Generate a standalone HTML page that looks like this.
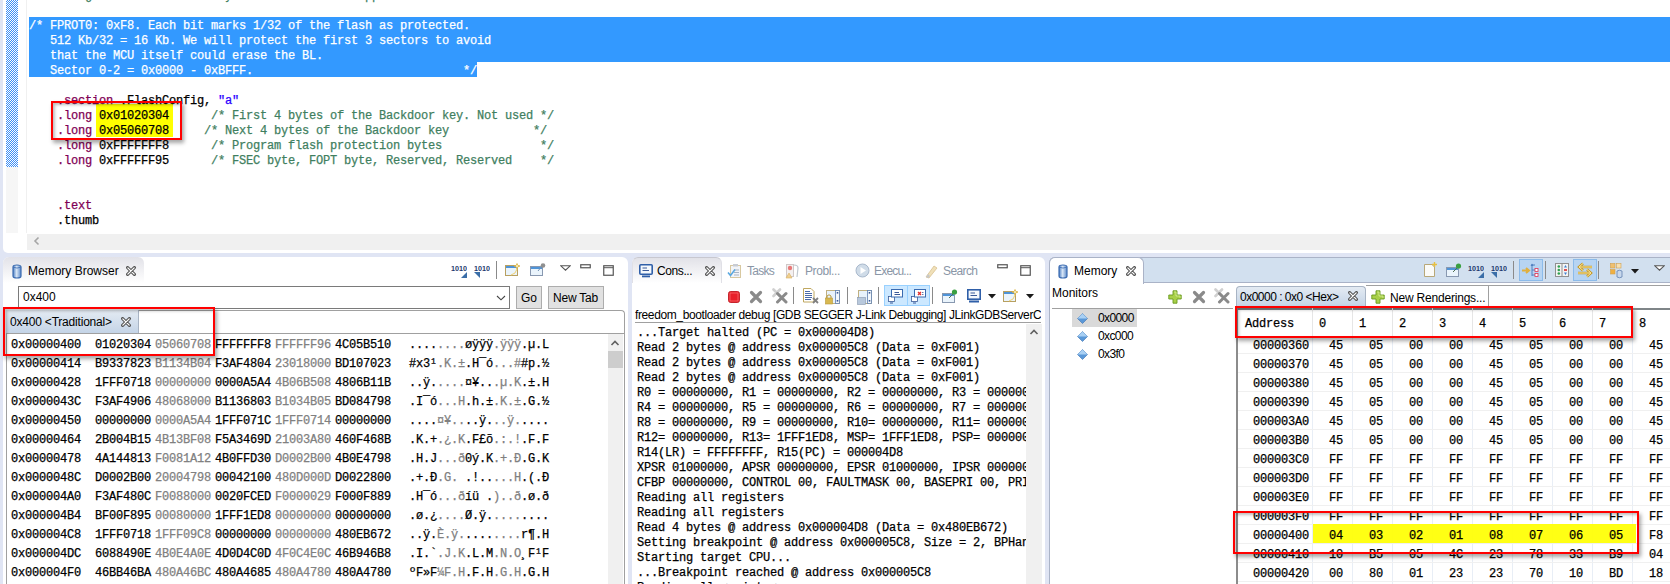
<!DOCTYPE html>
<html><head><meta charset="utf-8"><style>
*{margin:0;padding:0;box-sizing:border-box}
html,body{width:1670px;height:584px;overflow:hidden;background:#e0e5f4;position:relative;font-family:"Liberation Sans",sans-serif;font-size:12px;color:#000}
.a{position:absolute}
.mono{font-family:"Liberation Mono",monospace;font-size:11.67px;white-space:pre}
.ed{font-family:"Liberation Mono",monospace;font-size:12px;letter-spacing:-0.2px;white-space:pre;-webkit-text-stroke:0.25px}
.cm{color:#3f7f5f}.kw{color:#7f0055}.st{color:#2a00ff}
.redbox{position:absolute;border:2px solid #f00;box-shadow:2px 3px 4px rgba(0,0,0,.35), inset 2px 2px 3px rgba(0,0,0,.25)}
.ui{font-family:"Liberation Sans",sans-serif;font-size:12px;white-space:pre}
.g{color:#808080}
</style></head><body>
<div class="a " style="left:3px;top:0px;width:1667px;height:253px;background:#fff;border-bottom-left-radius:5px"></div>
<div class="a " style="left:6px;top:0px;width:12px;height:167px;background:repeating-conic-gradient(#3d8ef5 0 25%,#fff 0 50%) 0 0/2px 2px"></div>
<div class="a " style="left:6px;top:167px;width:12px;height:66px;background:#f6f6f6"></div>
<div class="a " style="left:26px;top:0px;width:1px;height:233px;background:#f0f0f0"></div>
<div class="a " style="left:29px;top:17px;width:1641px;height:45px;background:#3399ff"></div>
<div class="a " style="left:29px;top:62px;width:448px;height:15px;background:#3399ff"></div>
<div class="a " style="left:96px;top:104px;width:77px;height:33px;background:#ffff00"></div>
<div class="a ed" style="left:29px;top:0;width:1641px;height:233px;overflow:hidden;line-height:15px"><div class="a" style="left:0;top:-11px"><span class="cm">        g                   y                   pp</span></div>
<div class="a" style="left:0;top:19px"><span style="color:#fff">/* FPROT0: 0xF8. Each bit marks 1/32 of the flash as protected.</span></div>
<div class="a" style="left:0;top:34px"><span style="color:#fff">   512 Kb/32 = 16 Kb. We will protect the first 3 sectors to avoid</span></div>
<div class="a" style="left:0;top:49px"><span style="color:#fff">   that the MCU itself could erase the BL.</span></div>
<div class="a" style="left:0;top:64px"><span style="color:#fff">   Sector 0-2 = 0x0000 - 0xBFFF.                              */</span></div>
<div class="a" style="left:0;top:94px">    <span class="kw">.section</span> .FlashConfig, <span class="st">"a"</span></div>
<div class="a" style="left:0;top:109px">    <span class="kw">.long</span> 0x01020304      <span class="cm">/* First 4 bytes of the Backdoor key. Not used */</span></div>
<div class="a" style="left:0;top:124px">    <span class="kw">.long</span> 0x05060708     <span class="cm">/* Next 4 bytes of the Backdoor key            */</span></div>
<div class="a" style="left:0;top:139px">    <span class="kw">.long</span> 0xFFFFFFF8      <span class="cm">/* Program flash protection bytes              */</span></div>
<div class="a" style="left:0;top:154px">    <span class="kw">.long</span> 0xFFFFFF95      <span class="cm">/* FSEC byte, FOPT byte, Reserved, Reserved    */</span></div>
<div class="a" style="left:0;top:199px">    <span class="kw">.text</span></div>
<div class="a" style="left:0;top:214px">    .thumb</div>
</div>
<div class="a " style="left:27px;top:234px;width:1643px;height:16px;background:#f0f0f0"></div>
<svg class="a" style="left:32px;top:236px" width="10" height="10"><path d="M6.5 1.5 L3 5 L6.5 8.5" stroke="#a6a6a6" stroke-width="1.6" fill="none"/></svg>
<div class="redbox" style="left:51px;top:101px;width:131px;height:39px"></div>
<div class="a " style="left:3px;top:257px;width:625px;height:327px;background:#fff;border-radius:6px 6px 0 0"></div>
<div class="a " style="left:3px;top:257px;width:141px;height:26px;background:linear-gradient(#e2e2e8,#fff);border-radius:6px 6px 0 0"></div>
<div class="a ui" style="left:28px;top:264px;">Memory Browser</div>
<svg class="a" style="left:12px;top:264px" width="10" height="15" viewBox="0 0 10 15"><defs><linearGradient id="cg" x1="0" x2="1"><stop offset="0" stop-color="#4d7fc4"/><stop offset=".45" stop-color="#d8e6f6"/><stop offset="1" stop-color="#5a88c8"/></linearGradient></defs>
<path d="M1 3 Q1 1 5 1 Q9 1 9 3 L9 12 Q9 14 5 14 Q1 14 1 12 Z" fill="url(#cg)" stroke="#3a6ab0" stroke-width="1.2"/>
<path d="M1.5 3.2 Q5 5 8.5 3.2" stroke="#3a6ab0" stroke-width=".8" fill="none"/></svg>
<svg class="a" style="left:126px;top:266px" width="11" height="11" viewBox="0 0 11 11"><path d="M1.6 1.6 L8.4 8.4 M8.4 1.6 L1.6 8.4" stroke="#555" stroke-width="3.2" stroke-linecap="round"/><path d="M1.8 1.8 L8.2 8.2 M8.2 1.8 L1.8 8.2" stroke="#fff" stroke-width="1.2" stroke-linecap="round"/></svg>
<svg class="a" style="left:451px;top:265px" width="16" height="14" viewBox="0 0 16 14"><text x="0" y="6.3" font-family="Liberation Sans" font-weight="bold" font-size="7.8" fill="#1f3a6e" textLength="16" lengthAdjust="spacingAndGlyphs">1010</text><path d="M10 13 L16 7 L16 13 Z" fill="#3a6ea8"/></svg>
<svg class="a" style="left:474px;top:265px" width="16" height="14" viewBox="0 0 16 14"><text x="0" y="6.3" font-family="Liberation Sans" font-weight="bold" font-size="7.8" fill="#1f3a6e" textLength="16" lengthAdjust="spacingAndGlyphs">1010</text><path d="M0 7 L6 7 L6 13 Z" fill="#3a6ea8"/></svg>
<div class="a" style="left:496px;top:261px;width:1px;height:18px;background:#8a8a8a"></div>
<svg class="a" style="left:505px;top:263px" width="16" height="14" viewBox="0 0 16 14"><rect x="0.5" y="2.5" width="12" height="10" fill="#eaf4fc" stroke="#b8a060"/>
<rect x="1" y="3" width="11" height="2" fill="#4f94d8"/>
<path d="M12 0.5 L13 2.5 L15 3 L13 3.6 L12 6 L11 3.6 L9 3 L11 2.5 Z" fill="#fff6c8" stroke="#d8b040" stroke-width=".8"/>
<path d="M12 6 Q11 11 6 12" stroke="#f0d070" stroke-width="1" fill="none"/></svg>
<svg class="a" style="left:530px;top:263px" width="16" height="14" viewBox="0 0 16 14"><rect x="0.5" y="3.5" width="12" height="9" fill="#eaf4fc" stroke="#8898b0"/>
<rect x="1" y="4" width="11" height="2" fill="#4f94d8"/>
<path d="M8 8 L12 3" stroke="#7090b0" stroke-width="1"/>
<circle cx="13" cy="2.5" r="2.3" fill="#909090"/></svg>
<svg class="a" style="left:560px;top:265px" width="11" height="6" viewBox="0 0 11 6"><path d="M0.8 0.8 L10.2 0.8 L5.5 5.2 Z" fill="#fff" stroke="#555" stroke-width="1.1"/></svg>
<svg class="a" style="left:580px;top:264px" width="11" height="5" viewBox="0 0 11 5"><rect x="0.75" y="0.75" width="9.5" height="3" fill="#fff" stroke="#555" stroke-width="1.2"/></svg>
<svg class="a" style="left:603px;top:265px" width="11" height="11" viewBox="0 0 11 11"><rect x="0.75" y="0.75" width="9.5" height="9.5" fill="#fff" stroke="#555" stroke-width="1.2"/><rect x="1" y="2.2" width="9" height="1" fill="#555"/></svg>
<div class="a " style="left:18px;top:286px;width:492px;height:23px;border:1px solid #7a7a7a;background:#fff"></div>
<div class="a ui" style="left:23px;top:290px;">0x400</div>
<svg class="a" style="left:496px;top:295px" width="10" height="6" viewBox="0 0 10 6"><path d="M1 1 L5 4.8 L9 1" stroke="#444" stroke-width="1.1" fill="none"/></svg>
<div class="a " style="left:516px;top:286px;width:26px;height:23px;border:1px solid #adadad;background:#e1e1e1"></div>
<div class="a ui" style="left:521px;top:291px;">Go</div>
<div class="a " style="left:548px;top:286px;width:56px;height:23px;border:1px solid #adadad;background:#e1e1e1"></div>
<div class="a ui" style="left:553px;top:291px;letter-spacing:-0.2px">New Tab</div>
<div class="a " style="left:6px;top:310px;width:619px;height:274px;border:1px solid #a0a0a0;border-bottom:none;border-radius:0 4px 0 0;background:#fff"></div>
<div class="a " style="left:6px;top:310px;width:133px;height:24px;background:linear-gradient(#e4ebf3,#c3d3e6);border-right:1px solid #a8b4c4"></div>
<div class="a ui" style="left:10px;top:315px;letter-spacing:-0.2px">0x400 &lt;Traditional&gt;</div>
<svg class="a" style="left:121px;top:317px" width="11" height="11" viewBox="0 0 11 11"><path d="M1.6 1.6 L8.4 8.4 M8.4 1.6 L1.6 8.4" stroke="#555" stroke-width="3.2" stroke-linecap="round"/><path d="M1.8 1.8 L8.2 8.2 M8.2 1.8 L1.8 8.2" stroke="#fff" stroke-width="1.2" stroke-linecap="round"/></svg>
<div class="a " style="left:6px;top:333px;width:619px;height:1px;background:#a0a0a0"></div>
<div class="a" style="left:7px;top:334px;width:601px;height:250px;overflow:hidden"><div class="a ed" style="left:4px;top:4px;">0x00000400</div>
<div class="a ed" style="left:88px;top:4px;">01020304</div>
<div class="a ed" style="left:148px;top:4px;color:#808080">05060708</div>
<div class="a ed" style="left:208px;top:4px;">FFFFFFF8</div>
<div class="a ed" style="left:268px;top:4px;color:#808080">FFFFFF96</div>
<div class="a ed" style="left:328px;top:4px;">4C05B510</div>
<div class="a ed" style="left:402px;top:4px;">....<span class="g">....</span>øÿÿÿ<span class="g">.ÿÿÿ</span>.µ.L</div>
<div class="a ed" style="left:4px;top:23px;">0x00000414</div>
<div class="a ed" style="left:88px;top:23px;">B9337823</div>
<div class="a ed" style="left:148px;top:23px;color:#808080">B1134B04</div>
<div class="a ed" style="left:208px;top:23px;">F3AF4804</div>
<div class="a ed" style="left:268px;top:23px;color:#808080">23018000</div>
<div class="a ed" style="left:328px;top:23px;">BD107023</div>
<div class="a ed" style="left:402px;top:23px;">#x3¹<span class="g">.K.±</span>.H¯ó<span class="g">...#</span>#p.½</div>
<div class="a ed" style="left:4px;top:42px;">0x00000428</div>
<div class="a ed" style="left:88px;top:42px;">1FFF0718</div>
<div class="a ed" style="left:148px;top:42px;color:#808080">00000000</div>
<div class="a ed" style="left:208px;top:42px;">0000A5A4</div>
<div class="a ed" style="left:268px;top:42px;color:#808080">4B06B508</div>
<div class="a ed" style="left:328px;top:42px;">4806B11B</div>
<div class="a ed" style="left:402px;top:42px;">..ÿ.<span class="g">....</span>¤¥..<span class="g">.µ.K</span>.±.H</div>
<div class="a ed" style="left:4px;top:61px;">0x0000043C</div>
<div class="a ed" style="left:88px;top:61px;">F3AF4906</div>
<div class="a ed" style="left:148px;top:61px;color:#808080">48068000</div>
<div class="a ed" style="left:208px;top:61px;">B1136803</div>
<div class="a ed" style="left:268px;top:61px;color:#808080">B1034B05</div>
<div class="a ed" style="left:328px;top:61px;">BD084798</div>
<div class="a ed" style="left:402px;top:61px;">.I¯ó<span class="g">...H</span>.h.±<span class="g">.K.±</span>.G.½</div>
<div class="a ed" style="left:4px;top:80px;">0x00000450</div>
<div class="a ed" style="left:88px;top:80px;">00000000</div>
<div class="a ed" style="left:148px;top:80px;color:#808080">0000A5A4</div>
<div class="a ed" style="left:208px;top:80px;">1FFF071C</div>
<div class="a ed" style="left:268px;top:80px;color:#808080">1FFF0714</div>
<div class="a ed" style="left:328px;top:80px;">00000000</div>
<div class="a ed" style="left:402px;top:80px;">....<span class="g">¤¥..</span>..ÿ.<span class="g">..ÿ.</span>....</div>
<div class="a ed" style="left:4px;top:99px;">0x00000464</div>
<div class="a ed" style="left:88px;top:99px;">2B004B15</div>
<div class="a ed" style="left:148px;top:99px;color:#808080">4B13BF08</div>
<div class="a ed" style="left:208px;top:99px;">F5A3469D</div>
<div class="a ed" style="left:268px;top:99px;color:#808080">21003A80</div>
<div class="a ed" style="left:328px;top:99px;">460F468B</div>
<div class="a ed" style="left:402px;top:99px;">.K.+<span class="g">.¿.K</span>.F£õ<span class="g">.:.!</span>.F.F</div>
<div class="a ed" style="left:4px;top:118px;">0x00000478</div>
<div class="a ed" style="left:88px;top:118px;">4A144813</div>
<div class="a ed" style="left:148px;top:118px;color:#808080">F0081A12</div>
<div class="a ed" style="left:208px;top:118px;">4B0FFD30</div>
<div class="a ed" style="left:268px;top:118px;color:#808080">D0002B00</div>
<div class="a ed" style="left:328px;top:118px;">4B0E4798</div>
<div class="a ed" style="left:402px;top:118px;">.H.J<span class="g">...ð</span>0ý.K<span class="g">.+.Ð</span>.G.K</div>
<div class="a ed" style="left:4px;top:137px;">0x0000048C</div>
<div class="a ed" style="left:88px;top:137px;">D0002B00</div>
<div class="a ed" style="left:148px;top:137px;color:#808080">20004798</div>
<div class="a ed" style="left:208px;top:137px;">00042100</div>
<div class="a ed" style="left:268px;top:137px;color:#808080">480D000D</div>
<div class="a ed" style="left:328px;top:137px;">D0022800</div>
<div class="a ed" style="left:402px;top:137px;">.+.Ð<span class="g">.G. </span>.!..<span class="g">...H</span>.(.Ð</div>
<div class="a ed" style="left:4px;top:156px;">0x000004A0</div>
<div class="a ed" style="left:88px;top:156px;">F3AF480C</div>
<div class="a ed" style="left:148px;top:156px;color:#808080">F0088000</div>
<div class="a ed" style="left:208px;top:156px;">0020FCED</div>
<div class="a ed" style="left:268px;top:156px;color:#808080">F0000029</div>
<div class="a ed" style="left:328px;top:156px;">F000F889</div>
<div class="a ed" style="left:402px;top:156px;">.H¯ó<span class="g">...ð</span>íü .<span class="g">)..ð</span>.ø.ð</div>
<div class="a ed" style="left:4px;top:175px;">0x000004B4</div>
<div class="a ed" style="left:88px;top:175px;">BF00F895</div>
<div class="a ed" style="left:148px;top:175px;color:#808080">00080000</div>
<div class="a ed" style="left:208px;top:175px;">1FFF1ED8</div>
<div class="a ed" style="left:268px;top:175px;color:#808080">00000000</div>
<div class="a ed" style="left:328px;top:175px;">00000000</div>
<div class="a ed" style="left:402px;top:175px;">.ø.¿<span class="g">....</span>Ø.ÿ.<span class="g">....</span>....</div>
<div class="a ed" style="left:4px;top:194px;">0x000004C8</div>
<div class="a ed" style="left:88px;top:194px;">1FFF0718</div>
<div class="a ed" style="left:148px;top:194px;color:#808080">1FFF09C8</div>
<div class="a ed" style="left:208px;top:194px;">00000000</div>
<div class="a ed" style="left:268px;top:194px;color:#808080">00000000</div>
<div class="a ed" style="left:328px;top:194px;">480EB672</div>
<div class="a ed" style="left:402px;top:194px;">..ÿ.<span class="g">È.ÿ.</span>....<span class="g">....</span>r¶.H</div>
<div class="a ed" style="left:4px;top:213px;">0x000004DC</div>
<div class="a ed" style="left:88px;top:213px;">6088490E</div>
<div class="a ed" style="left:148px;top:213px;color:#808080">4B0E4A0E</div>
<div class="a ed" style="left:208px;top:213px;">4D0D4C0D</div>
<div class="a ed" style="left:268px;top:213px;color:#808080">4F0C4E0C</div>
<div class="a ed" style="left:328px;top:213px;">46B946B8</div>
<div class="a ed" style="left:402px;top:213px;">.I.`<span class="g">.J.K</span>.L.M<span class="g">.N.O</span>¸F¹F</div>
<div class="a ed" style="left:4px;top:232px;">0x000004F0</div>
<div class="a ed" style="left:88px;top:232px;">46BB46BA</div>
<div class="a ed" style="left:148px;top:232px;color:#808080">480A46BC</div>
<div class="a ed" style="left:208px;top:232px;">480A4685</div>
<div class="a ed" style="left:268px;top:232px;color:#808080">480A4780</div>
<div class="a ed" style="left:328px;top:232px;">480A4780</div>
<div class="a ed" style="left:402px;top:232px;">ºF»F<span class="g">¼F.H</span>.F.H<span class="g">.G.H</span>.G.H</div>
</div>
<div class="a " style="left:608px;top:334px;width:15px;height:250px;background:#f0f0f0"></div>
<div class="a " style="left:608px;top:351px;width:15px;height:17px;background:#cdcdcd"></div>
<svg class="a" style="left:610px;top:339px" width="10" height="8"><path d="M1.5 6 L5 2.5 L8.5 6" stroke="#606060" stroke-width="1.6" fill="none"/></svg>
<div class="redbox" style="left:3px;top:307px;width:212px;height:49px"></div>
<div class="a " style="left:632px;top:257px;width:413px;height:327px;background:#fff;border-radius:6px 6px 0 0"></div>
<div class="a " style="left:632px;top:257px;width:90px;height:26px;background:linear-gradient(#e2e2e8,#fff);border-radius:6px 6px 0 0;border:1px solid #c8c8d0;border-left-color:#e0e0e6;border-right-color:#e0e0e6;border-bottom:none"></div>
<div class="a " style="left:884px;top:285px;width:46px;height:21px;background:#cce8ff;border:1px solid #99d1ff"></div>
<div class="a " style="left:907px;top:285px;width:1px;height:21px;background:#99d1ff"></div>
<div class="a ui" style="left:657px;top:264px;letter-spacing:-0.4px">Cons...</div>
<svg class="a" style="left:639px;top:264px" width="14" height="14" viewBox="0 0 14 14"><rect x="0.8" y="0.8" width="12.4" height="9.4" rx="1" fill="#f4f8fc" stroke="#2f5fa8" stroke-width="1.6"/>
<path d="M3.5 4 H8 M3.5 6.5 H10" stroke="#3a5a98" stroke-width="1"/>
<rect x="3" y="11.5" width="8" height="1.8" fill="#2f5fa8"/></svg>
<svg class="a" style="left:705px;top:266px" width="11" height="11" viewBox="0 0 11 11"><path d="M1.6 1.6 L8.4 8.4 M8.4 1.6 L1.6 8.4" stroke="#555" stroke-width="3.2" stroke-linecap="round"/><path d="M1.8 1.8 L8.2 8.2 M8.2 1.8 L1.8 8.2" stroke="#fff" stroke-width="1.2" stroke-linecap="round"/></svg>
<svg class="a" style="left:727px;top:263px" width="16" height="16" viewBox="0 0 16 16"><rect x="3.5" y="2.5" width="10" height="12" fill="#f2f4f8" stroke="#d8c8a0"/>
<rect x="6" y="1" width="5" height="2.5" fill="#c8ccd4"/>
<path d="M7 7 H12 M7 9.5 H12 M7 12 H12" stroke="#a8b4c4" stroke-width="1"/>
<path d="M1 9.5 L3.5 12.5 L8 6.5" stroke="#5aa8e0" stroke-width="1.6" fill="none"/></svg>
<svg class="a" style="left:785px;top:263px" width="15" height="16" viewBox="0 0 15 16"><rect x="1.5" y="1.5" width="7" height="12" fill="#f4f0f0" stroke="#d0c8c8"/>
<circle cx="5" cy="5" r="2.2" fill="#e87878"/>
<path d="M9 2 Q13 2 13 5 L12 14" stroke="#c0c8d0" stroke-width="1.2" fill="none"/>
<path d="M1 15 L4 10 L7 15 Z" fill="#f0d090" stroke="#d8b060" stroke-width=".6"/></svg>
<svg class="a" style="left:855px;top:263px" width="15" height="15" viewBox="0 0 15 15"><circle cx="7.5" cy="7.5" r="6.5" fill="#d0dce8" stroke="#a8b8cc" stroke-width="1"/><path d="M5.5 4 L11 7.5 L5.5 11 Z" fill="#fff"/></svg>
<svg class="a" style="left:923px;top:263px" width="16" height="16" viewBox="0 0 16 16"><path d="M3 14 L11 3 L14 5 L6 15 Z" fill="#f0e0b8" stroke="#d8c090" stroke-width=".8"/><path d="M3 14 L5 11 L7 13 L5.5 15 Z" fill="#c8c8c8"/></svg>
<svg class="a" style="left:997px;top:264px" width="11" height="5" viewBox="0 0 11 5"><rect x="0.75" y="0.75" width="9.5" height="3" fill="#fff" stroke="#555" stroke-width="1.2"/></svg>
<svg class="a" style="left:1020px;top:265px" width="11" height="11" viewBox="0 0 11 11"><rect x="0.75" y="0.75" width="9.5" height="9.5" fill="#fff" stroke="#555" stroke-width="1.2"/><rect x="1" y="2.2" width="9" height="1" fill="#555"/></svg>
<svg class="a" style="left:728px;top:291px" width="12" height="12" viewBox="0 0 12 12"><rect x="0.6" y="0.6" width="10.8" height="10.8" rx="1.8" fill="#e8202a" stroke="#c01820" stroke-width="1"/><rect x="2" y="2" width="8" height="8" fill="none" stroke="#ff8080" stroke-width=".6"/></svg>
<svg class="a" style="left:749px;top:290px" width="14" height="14" viewBox="0 0 14 14"><path d="M2.5 2.5 L11.5 11.5 M11.5 2.5 L2.5 11.5" stroke="#8a8a8a" stroke-width="3.2" stroke-linecap="round"/></svg>
<svg class="a" style="left:772px;top:288px" width="16" height="16" viewBox="0 0 16 16"><path d="M1.5 1.5 L8 8 M8 1.5 L1.5 8" stroke="#d0d0d0" stroke-width="2.6" stroke-linecap="round"/><path d="M5.5 5.5 L14 14 M14 5.5 L5.5 14" stroke="#8a8a8a" stroke-width="3" stroke-linecap="round"/></svg>
<div class="a" style="left:793px;top:287px;width:1px;height:17px;background:#8a8a8a"></div>
<svg class="a" style="left:803px;top:288px" width="16" height="16" viewBox="0 0 16 16"><path d="M0.5 0.5 H8 L11 3.5 V14 H0.5 Z" fill="#fff" stroke="#c0a860"/>
<path d="M2 3.5 H7 M2 5.5 H9 M2 7.5 H9 M2 9.5 H9 M2 11.5 H8" stroke="#4a6aa8" stroke-width="1" shape-rendering="crispEdges"/>
<path d="M10 10 L15 15 M15 10 L10 15" stroke="#808080" stroke-width="1.8"/></svg>
<svg class="a" style="left:825px;top:289px" width="16" height="16" viewBox="0 0 16 16"><rect x="1.5" y="1.5" width="13" height="13" fill="#e8f2fc" stroke="#c0b080"/>
<rect x="10.5" y="1.5" width="4" height="13" fill="#f4f8fc" stroke="#6080b0" stroke-width=".8"/>
<rect x="11.7" y="3" width="1.6" height="1.6" fill="#3a5a98"/><rect x="11.7" y="11" width="1.6" height="1.6" fill="#3a5a98"/>
<rect x="0.5" y="9" width="7" height="6" fill="#d8b850" stroke="#b89838" stroke-width=".6"/><path d="M2 9 V7 Q4 4.5 6 7 V9" stroke="#b89838" fill="none"/></svg>
<div class="a" style="left:847px;top:287px;width:1px;height:17px;background:#8a8a8a"></div>
<svg class="a" style="left:857px;top:289px" width="16" height="16" viewBox="0 0 16 16"><rect x="1.5" y="1.5" width="13" height="13" fill="#e8f2fc" stroke="#c0b080"/>
<rect x="10.5" y="1.5" width="4" height="13" fill="#f4f8fc" stroke="#6080b0" stroke-width=".8"/>
<rect x="11.7" y="3" width="1.6" height="1.6" fill="#3a5a98"/><rect x="11.7" y="11" width="1.6" height="1.6" fill="#3a5a98"/>
<rect x="0.5" y="8.5" width="8" height="7" fill="#b8c8dc" stroke="#8898b0" stroke-width=".6"/></svg>
<div class="a" style="left:878px;top:287px;width:1px;height:17px;background:#8a8a8a"></div>
<svg class="a" style="left:888px;top:288px" width="16" height="16" viewBox="0 0 16 16"><rect x="0.5" y="8.5" width="6" height="5" fill="#fff" stroke="#3a5a98" stroke-width=".8"/><path d="M2 15 H5" stroke="#3a5a98" stroke-width="1"/>
<rect x="3.5" y="1.5" width="11" height="7.5" fill="#fff" stroke="#3a6ab0" stroke-width="1"/><path d="M6.5 4.5 H11 M6.5 6.5 H12" stroke="#3a5a98" stroke-width="1"/></svg>
<svg class="a" style="left:911px;top:288px" width="16" height="16" viewBox="0 0 16 16"><rect x="0.5" y="8.5" width="6" height="5" fill="#fff" stroke="#3a5a98" stroke-width=".8"/><path d="M2 15 H5" stroke="#3a5a98" stroke-width="1"/>
<rect x="3.5" y="1.5" width="11" height="7.5" fill="#fff" stroke="#3a6ab0" stroke-width="1"/><path d="M7 4 L10 7 M10 4 L7 7" stroke="#e03030" stroke-width="1.4"/><path d="M11 4.5 H12.5 M11 6.5 H12.5" stroke="#3a5a98" stroke-width=".8"/></svg>
<div class="a" style="left:932px;top:287px;width:1px;height:17px;background:#8a8a8a"></div>
<svg class="a" style="left:942px;top:289px" width="16" height="14" viewBox="0 0 16 14"><rect x="0.5" y="4.5" width="12" height="9" fill="#eaf4fc" stroke="#8898b0"/>
<rect x="1" y="5" width="11" height="2" fill="#4f94d8"/>
<path d="M7 9 L11 5" stroke="#507050" stroke-width="1"/>
<circle cx="12.5" cy="3" r="2.6" fill="#3aa040"/></svg>
<svg class="a" style="left:967px;top:289px" width="14" height="14" viewBox="0 0 14 14"><rect x="0.8" y="0.8" width="12.4" height="9.4" fill="#f4f8fc" stroke="#2f5fa8" stroke-width="1.6"/>
<path d="M3.5 4 H8 M3.5 6.5 H10" stroke="#3a5a98" stroke-width="1"/><rect x="2" y="11.5" width="10" height="2" fill="#2f5fa8"/></svg>
<svg class="a" style="left:988px;top:294px" width="8" height="5" viewBox="0 0 8 5"><path d="M0 0 L8 0 L4 4.5 Z" fill="#1a1a1a"/></svg>
<svg class="a" style="left:1003px;top:289px" width="16" height="14" viewBox="0 0 16 14"><rect x="0.5" y="2.5" width="12" height="10" fill="#eaf4fc" stroke="#b8a060"/>
<rect x="1" y="3" width="11" height="2" fill="#4f94d8"/>
<path d="M12 0.5 L13 2.5 L15 3 L13 3.6 L12 6 L11 3.6 L9 3 L11 2.5 Z" fill="#fff6c8" stroke="#d8b040" stroke-width=".8"/>
<path d="M12 6 Q11 11 6 12" stroke="#f0d070" stroke-width="1" fill="none"/></svg>
<svg class="a" style="left:1026px;top:294px" width="8" height="5" viewBox="0 0 8 5"><path d="M0 0 L8 0 L4 4.5 Z" fill="#1a1a1a"/></svg>
<div class="a ui" style="left:747px;top:264px;color:#8a96a6;letter-spacing:-0.7px">Tasks</div>
<div class="a ui" style="left:805px;top:264px;color:#8a96a6;letter-spacing:-0.4px">Probl...</div>
<div class="a ui" style="left:874px;top:264px;color:#8a96a6;letter-spacing:-0.8px">Execu...</div>
<div class="a ui" style="left:943px;top:264px;color:#8a96a6;letter-spacing:-0.6px">Search</div>
<div class="a ui" style="left:635px;top:308px;width:406px;overflow:hidden;letter-spacing:-0.38px">freedom_bootloader debug [GDB SEGGER J-Link Debugging] JLinkGDBServerC</div>
<div class="a " style="left:635px;top:322px;width:406px;height:1px;background:#a0a0a0"></div>
<div class="a ed" style="left:637px;top:323px;width:389px;height:261px;overflow:hidden;line-height:15px"><div class="a" style="left:0;top:3px">...Target halted (PC = 0x000004D8)</div><div class="a" style="left:0;top:18px">Read 2 bytes @ address 0x000005C8 (Data = 0xF001)</div><div class="a" style="left:0;top:33px">Read 2 bytes @ address 0x000005C8 (Data = 0xF001)</div><div class="a" style="left:0;top:48px">Read 2 bytes @ address 0x000005C8 (Data = 0xF001)</div><div class="a" style="left:0;top:63px">R0 = 00000000, R1 = 00000000, R2 = 00000000, R3 = 00000000</div><div class="a" style="left:0;top:78px">R4 = 00000000, R5 = 00000000, R6 = 00000000, R7 = 00000000</div><div class="a" style="left:0;top:93px">R8 = 00000000, R9 = 00000000, R10= 00000000, R11= 00000000</div><div class="a" style="left:0;top:108px">R12= 00000000, R13= 1FFF1ED8, MSP= 1FFF1ED8, PSP= 00000000</div><div class="a" style="left:0;top:123px">R14(LR) = FFFFFFFF, R15(PC) = 000004D8</div><div class="a" style="left:0;top:138px">XPSR 01000000, APSR 00000000, EPSR 01000000, IPSR 00000000</div><div class="a" style="left:0;top:153px">CFBP 00000000, CONTROL 00, FAULTMASK 00, BASEPRI 00, PRIMASK 00</div><div class="a" style="left:0;top:168px">Reading all registers</div><div class="a" style="left:0;top:183px">Reading all registers</div><div class="a" style="left:0;top:198px">Read 4 bytes @ address 0x000004D8 (Data = 0x480EB672)</div><div class="a" style="left:0;top:213px">Setting breakpoint @ address 0x000005C8, Size = 2, BPHandle = 0x0001</div><div class="a" style="left:0;top:228px">Starting target CPU...</div><div class="a" style="left:0;top:243px">...Breakpoint reached @ address 0x000005C8</div><div class="a" style="left:0;top:258px">Reading all registers</div></div>
<div class="a " style="left:1026px;top:324px;width:16px;height:260px;background:#f0f0f0"></div>
<svg class="a" style="left:1029px;top:328px" width="10" height="8" viewBox="0 0 10 8"><path d="M1.5 6 L5 2.5 L8.5 6" stroke="#606060" stroke-width="1.6" fill="none"/></svg>
<div class="a " style="left:1049px;top:257px;width:621px;height:327px;background:#fff;border:1px solid #aab3c7;border-right:none;border-bottom:none;border-radius:6px 0 0 0"></div>
<div class="a " style="left:1136px;top:257px;width:534px;height:26px;background:#d2e0ef;border-top:1px solid #aab3c7;border-bottom:1px solid #aab3c7"></div>
<div class="a " style="left:1049px;top:257px;width:95px;height:27px;background:#fff;border:1px solid #aab3c7;border-bottom:none;border-radius:6px 6px 0 0"></div>
<div class="a " style="left:1519px;top:259px;width:24px;height:22px;background:#b7d4f2;border:1px solid #8cbbea"></div>
<div class="a " style="left:1573px;top:259px;width:24px;height:22px;background:#b7d4f2;border:1px solid #8cbbea"></div>
<div class="a " style="left:1072px;top:309px;width:65px;height:18px;background:#d9d9d9"></div>
<div class="a ui" style="left:1074px;top:264px;">Memory</div>
<svg class="a" style="left:1058px;top:264px" width="10" height="15" viewBox="0 0 10 15"><defs><linearGradient id="cg" x1="0" x2="1"><stop offset="0" stop-color="#4d7fc4"/><stop offset=".45" stop-color="#d8e6f6"/><stop offset="1" stop-color="#5a88c8"/></linearGradient></defs>
<path d="M1 3 Q1 1 5 1 Q9 1 9 3 L9 12 Q9 14 5 14 Q1 14 1 12 Z" fill="url(#cg)" stroke="#3a6ab0" stroke-width="1.2"/>
<path d="M1.5 3.2 Q5 5 8.5 3.2" stroke="#3a6ab0" stroke-width=".8" fill="none"/></svg>
<svg class="a" style="left:1126px;top:266px" width="11" height="11" viewBox="0 0 11 11"><path d="M1.6 1.6 L8.4 8.4 M8.4 1.6 L1.6 8.4" stroke="#555" stroke-width="3.2" stroke-linecap="round"/><path d="M1.8 1.8 L8.2 8.2 M8.2 1.8 L1.8 8.2" stroke="#fff" stroke-width="1.2" stroke-linecap="round"/></svg>
<svg class="a" style="left:1424px;top:262px" width="14" height="15" viewBox="0 0 14 15"><path d="M0.5 2.5 H8 L10.5 5 V14.5 H0.5 Z" fill="#fbfbf8" stroke="#b8a878"/><path d="M10.5 0 V5 M8 2.5 H13" stroke="#e8c040" stroke-width="1.4"/></svg>
<svg class="a" style="left:1446px;top:263px" width="16" height="14" viewBox="0 0 16 14"><rect x="0.5" y="4.5" width="12" height="9" fill="#eaf4fc" stroke="#8898b0"/>
<rect x="1" y="5" width="11" height="2" fill="#4f94d8"/>
<path d="M7 9 L11 5" stroke="#507050" stroke-width="1"/>
<circle cx="12.5" cy="3" r="2.6" fill="#3aa040"/></svg>
<svg class="a" style="left:1468px;top:265px" width="16" height="14" viewBox="0 0 16 14"><text x="0" y="6.3" font-family="Liberation Sans" font-weight="bold" font-size="7.8" fill="#1f3a6e" textLength="16" lengthAdjust="spacingAndGlyphs">1010</text><path d="M10 13 L16 7 L16 13 Z" fill="#3a6ea8"/></svg>
<svg class="a" style="left:1491px;top:265px" width="16" height="14" viewBox="0 0 16 14"><text x="0" y="6.3" font-family="Liberation Sans" font-weight="bold" font-size="7.8" fill="#1f3a6e" textLength="16" lengthAdjust="spacingAndGlyphs">1010</text><path d="M0 7 L6 7 L6 13 Z" fill="#3a6ea8"/></svg>
<div class="a" style="left:1513px;top:261px;width:1px;height:18px;background:#8a8a8a"></div>
<svg class="a" style="left:1521px;top:262px" width="20" height="16" viewBox="0 0 20 16"><path d="M1 8.5 H7 M5 6 L8 8.5 L5 11" stroke="#e0b040" stroke-width="2" fill="none"/>
<path d="M11 2 V14 M11 8 H14 M11 13 H14 M11 3 H14" stroke="#5080c0" stroke-width="1"/>
<path d="M9.5 4 L11 1.5 L12.5 4" fill="#5080c0"/>
<rect x="14" y="6.5" width="3" height="3" fill="#fff" stroke="#e03050" stroke-width=".8"/><rect x="14" y="11.5" width="3" height="3" fill="#fff" stroke="#e03050" stroke-width=".8"/></svg>
<div class="a" style="left:1545px;top:261px;width:1px;height:18px;background:#8a8a8a"></div>
<svg class="a" style="left:1555px;top:263px" width="14" height="14" viewBox="0 0 14 14"><rect x="0.5" y="0.5" width="13" height="13" fill="#f4f4f4" stroke="#909090"/><path d="M7 1 V13" stroke="#909090"/>
<circle cx="3.8" cy="3.5" r="1.3" fill="#30a050"/><circle cx="3.8" cy="7" r="1.3" fill="#30a050"/><circle cx="3.8" cy="10.5" r="1.3" fill="#30a050"/>
<path d="M9 4.5 L10.5 2 L12 4.5 Z M9 9.5 L10.5 12 L12 9.5 Z" fill="#4080d0"/><rect x="9" y="6" width="3" height="2" fill="#e05050"/></svg>
<svg class="a" style="left:1576px;top:262px" width="18" height="16" viewBox="0 0 18 16"><path d="M16 5 H4 M7 1.5 L3 5 L7 8.5" stroke="#c89820" stroke-width="2.4" fill="none"/><path d="M16 5 H4 M7 1.5 L3 5 L7 8.5" stroke="#fff0b0" stroke-width=".9" fill="none"/>
<path d="M2 11 H14 M11 7.5 L15 11 L11 14.5" stroke="#c89820" stroke-width="2.4" fill="none"/><path d="M2 11 H14 M11 7.5 L15 11 L11 14.5" stroke="#fff0b0" stroke-width=".9" fill="none"/></svg>
<div class="a" style="left:1598px;top:261px;width:1px;height:18px;background:#8a8a8a"></div>
<svg class="a" style="left:1610px;top:263px" width="14" height="16" viewBox="0 0 14 16"><rect x="0.5" y="0.5" width="4.5" height="4.5" fill="#f0c070" stroke="#d0a050" stroke-width=".6"/><rect x="6.5" y="0.5" width="4.5" height="4.5" fill="#f8e0b0" stroke="#d0a050" stroke-width=".6"/>
<rect x="0.5" y="6.5" width="4.5" height="4.5" fill="#f0b040" stroke="#d0a050" stroke-width=".6"/>
<path d="M7 8 Q9.5 6.5 12 8 V14 Q9.5 15.5 7 14 Z" fill="#c8d8ec" stroke="#6080b0" stroke-width=".8"/></svg>
<svg class="a" style="left:1631px;top:269px" width="8" height="5" viewBox="0 0 8 5"><path d="M0 0 L8 0 L4 4.5 Z" fill="#1a1a1a"/></svg>
<svg class="a" style="left:1654px;top:265px" width="11" height="6" viewBox="0 0 11 6"><path d="M0.8 0.8 L10.2 0.8 L5.5 5.2 Z" fill="#fff" stroke="#555" stroke-width="1.1"/></svg>
<svg class="a" style="left:1168px;top:290px" width="14" height="14" viewBox="0 0 14 14"><path d="M5 0.8 H9 V5 H13.2 V9 H9 V13.2 H5 V9 H0.8 V5 H5 Z" fill="#a8d048" stroke="#6a9a20" stroke-width=".9"/><path d="M6 2 H8 V6 H12 V8" stroke="#e0f4a0" stroke-width=".7" fill="none"/></svg>
<svg class="a" style="left:1192px;top:290px" width="14" height="14" viewBox="0 0 14 14"><path d="M2.5 2.5 L11.5 11.5 M11.5 2.5 L2.5 11.5" stroke="#8a8a8a" stroke-width="3.2" stroke-linecap="round"/></svg>
<svg class="a" style="left:1214px;top:288px" width="16" height="16" viewBox="0 0 16 16"><path d="M1.5 1.5 L8 8 M8 1.5 L1.5 8" stroke="#d0d0d0" stroke-width="2.6" stroke-linecap="round"/><path d="M5.5 5.5 L14 14 M14 5.5 L5.5 14" stroke="#8a8a8a" stroke-width="3" stroke-linecap="round"/></svg>
<svg class="a" style="left:1077px;top:313px" width="11" height="11" viewBox="0 0 11 11"><path d="M5.5 0.5 L10.5 5.5 L5.5 10.5 L0.5 5.5 Z" fill="#5a98d8" stroke="#3a70b0" stroke-width=".6"/><path d="M0.5 5.5 L5.5 0.5 L10.5 5.5 Z" fill="#a8d0f4"/></svg>
<svg class="a" style="left:1077px;top:331px" width="11" height="11" viewBox="0 0 11 11"><path d="M5.5 0.5 L10.5 5.5 L5.5 10.5 L0.5 5.5 Z" fill="#5a98d8" stroke="#3a70b0" stroke-width=".6"/><path d="M0.5 5.5 L5.5 0.5 L10.5 5.5 Z" fill="#a8d0f4"/></svg>
<svg class="a" style="left:1077px;top:349px" width="11" height="11" viewBox="0 0 11 11"><path d="M5.5 0.5 L10.5 5.5 L5.5 10.5 L0.5 5.5 Z" fill="#5a98d8" stroke="#3a70b0" stroke-width=".6"/><path d="M0.5 5.5 L5.5 0.5 L10.5 5.5 Z" fill="#a8d0f4"/></svg>
<svg class="a" style="left:1371px;top:290px" width="14" height="14" viewBox="0 0 14 14"><path d="M5 0.8 H9 V5 H13.2 V9 H9 V13.2 H5 V9 H0.8 V5 H5 Z" fill="#a8d048" stroke="#6a9a20" stroke-width=".9"/><path d="M6 2 H8 V6 H12 V8" stroke="#e0f4a0" stroke-width=".7" fill="none"/></svg>
<div class="a ui" style="left:1052px;top:286px;">Monitors</div>
<div class="a " style="left:1052px;top:308px;width:181px;height:1px;background:#a0a0a0"></div>
<div class="a ui" style="left:1098px;top:311px;letter-spacing:-0.6px">0x0000</div>
<div class="a ui" style="left:1098px;top:329px;letter-spacing:-0.6px">0xc000</div>
<div class="a ui" style="left:1098px;top:347px;letter-spacing:-0.6px">0x3f0</div>
<div class="a " style="left:1236px;top:286px;width:130px;height:21px;background:linear-gradient(#e4ebf3,#c3d3e6);border:1px solid #a8b4c4;border-bottom:none;border-radius:4px 4px 0 0"></div>
<div class="a ui" style="left:1240px;top:290px;letter-spacing:-0.5px">0x0000 : 0x0 &lt;Hex&gt;</div>
<svg class="a" style="left:1348px;top:291px" width="11" height="11" viewBox="0 0 11 11"><path d="M1.6 1.6 L8.4 8.4 M8.4 1.6 L1.6 8.4" stroke="#555" stroke-width="3.2" stroke-linecap="round"/><path d="M1.8 1.8 L8.2 8.2 M8.2 1.8 L1.8 8.2" stroke="#fff" stroke-width="1.2" stroke-linecap="round"/></svg>
<div class="a ui" style="left:1390px;top:291px;letter-spacing:-0.2px">New Renderings...</div>
<div class="a " style="left:1488px;top:286px;width:1px;height:21px;background:#a0a0a0"></div>
<div class="a " style="left:1366px;top:285px;width:304px;height:1px;background:#a0a0a0"></div>
<div class="a " style="left:1236px;top:308px;width:434px;height:2px;background:#7f8588"></div>
<div class="a " style="left:1236px;top:307px;width:2px;height:277px;background:#8c8c8c"></div>
<div class="a " style="left:1312px;top:307px;width:1px;height:30px;background:#e6e6e6"></div>
<div class="a " style="left:1312px;top:337px;width:1px;height:247px;background:#e8eef6"></div>
<div class="a " style="left:1352px;top:307px;width:1px;height:30px;background:#e6e6e6"></div>
<div class="a " style="left:1352px;top:337px;width:1px;height:247px;background:#e8eef6"></div>
<div class="a " style="left:1392px;top:307px;width:1px;height:30px;background:#e6e6e6"></div>
<div class="a " style="left:1392px;top:337px;width:1px;height:247px;background:#e8eef6"></div>
<div class="a " style="left:1432px;top:307px;width:1px;height:30px;background:#e6e6e6"></div>
<div class="a " style="left:1432px;top:337px;width:1px;height:247px;background:#e8eef6"></div>
<div class="a " style="left:1472px;top:307px;width:1px;height:30px;background:#e6e6e6"></div>
<div class="a " style="left:1472px;top:337px;width:1px;height:247px;background:#e8eef6"></div>
<div class="a " style="left:1512px;top:307px;width:1px;height:30px;background:#e6e6e6"></div>
<div class="a " style="left:1512px;top:337px;width:1px;height:247px;background:#e8eef6"></div>
<div class="a " style="left:1552px;top:307px;width:1px;height:30px;background:#e6e6e6"></div>
<div class="a " style="left:1552px;top:337px;width:1px;height:247px;background:#e8eef6"></div>
<div class="a " style="left:1592px;top:307px;width:1px;height:30px;background:#e6e6e6"></div>
<div class="a " style="left:1592px;top:337px;width:1px;height:247px;background:#e8eef6"></div>
<div class="a " style="left:1632px;top:307px;width:1px;height:30px;background:#e6e6e6"></div>
<div class="a " style="left:1632px;top:337px;width:1px;height:247px;background:#e8eef6"></div>
<div class="a ed" style="left:1245px;top:317px;">Address</div>
<div class="a ed" style="left:1319px;top:317px;">0</div>
<div class="a ed" style="left:1359px;top:317px;">1</div>
<div class="a ed" style="left:1399px;top:317px;">2</div>
<div class="a ed" style="left:1439px;top:317px;">3</div>
<div class="a ed" style="left:1479px;top:317px;">4</div>
<div class="a ed" style="left:1519px;top:317px;">5</div>
<div class="a ed" style="left:1559px;top:317px;">6</div>
<div class="a ed" style="left:1599px;top:317px;">7</div>
<div class="a ed" style="left:1639px;top:317px;">8</div>
<div class="a " style="left:1238px;top:353px;width:432px;height:1px;background:#f0f0f0"></div>
<div class="a " style="left:1238px;top:372px;width:432px;height:1px;background:#f0f0f0"></div>
<div class="a " style="left:1238px;top:391px;width:432px;height:1px;background:#f0f0f0"></div>
<div class="a " style="left:1238px;top:410px;width:432px;height:1px;background:#f0f0f0"></div>
<div class="a " style="left:1238px;top:429px;width:432px;height:1px;background:#f0f0f0"></div>
<div class="a " style="left:1238px;top:448px;width:432px;height:1px;background:#f0f0f0"></div>
<div class="a " style="left:1238px;top:467px;width:432px;height:1px;background:#f0f0f0"></div>
<div class="a " style="left:1238px;top:486px;width:432px;height:1px;background:#f0f0f0"></div>
<div class="a " style="left:1238px;top:505px;width:432px;height:1px;background:#f0f0f0"></div>
<div class="a " style="left:1238px;top:524px;width:432px;height:1px;background:#f0f0f0"></div>
<div class="a " style="left:1238px;top:543px;width:432px;height:1px;background:#f0f0f0"></div>
<div class="a " style="left:1238px;top:562px;width:432px;height:1px;background:#f0f0f0"></div>
<div class="a " style="left:1238px;top:581px;width:432px;height:1px;background:#f0f0f0"></div>
<div class="a " style="left:1313px;top:524px;width:323px;height:19px;background:rgba(255,255,0,0.92)"></div>
<div class="a" style="left:1238px;top:337px;width:432px;height:247px;overflow:hidden"><div class="a ed" style="left:15px;top:2px;">00000360</div>
<div class="a ed" style="left:91px;top:2px;">45</div>
<div class="a ed" style="left:131px;top:2px;">05</div>
<div class="a ed" style="left:171px;top:2px;">00</div>
<div class="a ed" style="left:211px;top:2px;">00</div>
<div class="a ed" style="left:251px;top:2px;">45</div>
<div class="a ed" style="left:291px;top:2px;">05</div>
<div class="a ed" style="left:331px;top:2px;">00</div>
<div class="a ed" style="left:371px;top:2px;">00</div>
<div class="a ed" style="left:411px;top:2px;">45</div>
<div class="a ed" style="left:15px;top:21px;">00000370</div>
<div class="a ed" style="left:91px;top:21px;">45</div>
<div class="a ed" style="left:131px;top:21px;">05</div>
<div class="a ed" style="left:171px;top:21px;">00</div>
<div class="a ed" style="left:211px;top:21px;">00</div>
<div class="a ed" style="left:251px;top:21px;">45</div>
<div class="a ed" style="left:291px;top:21px;">05</div>
<div class="a ed" style="left:331px;top:21px;">00</div>
<div class="a ed" style="left:371px;top:21px;">00</div>
<div class="a ed" style="left:411px;top:21px;">45</div>
<div class="a ed" style="left:15px;top:40px;">00000380</div>
<div class="a ed" style="left:91px;top:40px;">45</div>
<div class="a ed" style="left:131px;top:40px;">05</div>
<div class="a ed" style="left:171px;top:40px;">00</div>
<div class="a ed" style="left:211px;top:40px;">00</div>
<div class="a ed" style="left:251px;top:40px;">45</div>
<div class="a ed" style="left:291px;top:40px;">05</div>
<div class="a ed" style="left:331px;top:40px;">00</div>
<div class="a ed" style="left:371px;top:40px;">00</div>
<div class="a ed" style="left:411px;top:40px;">45</div>
<div class="a ed" style="left:15px;top:59px;">00000390</div>
<div class="a ed" style="left:91px;top:59px;">45</div>
<div class="a ed" style="left:131px;top:59px;">05</div>
<div class="a ed" style="left:171px;top:59px;">00</div>
<div class="a ed" style="left:211px;top:59px;">00</div>
<div class="a ed" style="left:251px;top:59px;">45</div>
<div class="a ed" style="left:291px;top:59px;">05</div>
<div class="a ed" style="left:331px;top:59px;">00</div>
<div class="a ed" style="left:371px;top:59px;">00</div>
<div class="a ed" style="left:411px;top:59px;">45</div>
<div class="a ed" style="left:15px;top:78px;">000003A0</div>
<div class="a ed" style="left:91px;top:78px;">45</div>
<div class="a ed" style="left:131px;top:78px;">05</div>
<div class="a ed" style="left:171px;top:78px;">00</div>
<div class="a ed" style="left:211px;top:78px;">00</div>
<div class="a ed" style="left:251px;top:78px;">45</div>
<div class="a ed" style="left:291px;top:78px;">05</div>
<div class="a ed" style="left:331px;top:78px;">00</div>
<div class="a ed" style="left:371px;top:78px;">00</div>
<div class="a ed" style="left:411px;top:78px;">45</div>
<div class="a ed" style="left:15px;top:97px;">000003B0</div>
<div class="a ed" style="left:91px;top:97px;">45</div>
<div class="a ed" style="left:131px;top:97px;">05</div>
<div class="a ed" style="left:171px;top:97px;">00</div>
<div class="a ed" style="left:211px;top:97px;">00</div>
<div class="a ed" style="left:251px;top:97px;">45</div>
<div class="a ed" style="left:291px;top:97px;">05</div>
<div class="a ed" style="left:331px;top:97px;">00</div>
<div class="a ed" style="left:371px;top:97px;">00</div>
<div class="a ed" style="left:411px;top:97px;">45</div>
<div class="a ed" style="left:15px;top:116px;">000003C0</div>
<div class="a ed" style="left:91px;top:116px;">FF</div>
<div class="a ed" style="left:131px;top:116px;">FF</div>
<div class="a ed" style="left:171px;top:116px;">FF</div>
<div class="a ed" style="left:211px;top:116px;">FF</div>
<div class="a ed" style="left:251px;top:116px;">FF</div>
<div class="a ed" style="left:291px;top:116px;">FF</div>
<div class="a ed" style="left:331px;top:116px;">FF</div>
<div class="a ed" style="left:371px;top:116px;">FF</div>
<div class="a ed" style="left:411px;top:116px;">FF</div>
<div class="a ed" style="left:15px;top:135px;">000003D0</div>
<div class="a ed" style="left:91px;top:135px;">FF</div>
<div class="a ed" style="left:131px;top:135px;">FF</div>
<div class="a ed" style="left:171px;top:135px;">FF</div>
<div class="a ed" style="left:211px;top:135px;">FF</div>
<div class="a ed" style="left:251px;top:135px;">FF</div>
<div class="a ed" style="left:291px;top:135px;">FF</div>
<div class="a ed" style="left:331px;top:135px;">FF</div>
<div class="a ed" style="left:371px;top:135px;">FF</div>
<div class="a ed" style="left:411px;top:135px;">FF</div>
<div class="a ed" style="left:15px;top:154px;">000003E0</div>
<div class="a ed" style="left:91px;top:154px;">FF</div>
<div class="a ed" style="left:131px;top:154px;">FF</div>
<div class="a ed" style="left:171px;top:154px;">FF</div>
<div class="a ed" style="left:211px;top:154px;">FF</div>
<div class="a ed" style="left:251px;top:154px;">FF</div>
<div class="a ed" style="left:291px;top:154px;">FF</div>
<div class="a ed" style="left:331px;top:154px;">FF</div>
<div class="a ed" style="left:371px;top:154px;">FF</div>
<div class="a ed" style="left:411px;top:154px;">FF</div>
<div class="a ed" style="left:15px;top:173px;">000003F0</div>
<div class="a ed" style="left:91px;top:173px;">FF</div>
<div class="a ed" style="left:131px;top:173px;">FF</div>
<div class="a ed" style="left:171px;top:173px;">FF</div>
<div class="a ed" style="left:211px;top:173px;">FF</div>
<div class="a ed" style="left:251px;top:173px;">FF</div>
<div class="a ed" style="left:291px;top:173px;">FF</div>
<div class="a ed" style="left:331px;top:173px;">FF</div>
<div class="a ed" style="left:371px;top:173px;">FF</div>
<div class="a ed" style="left:411px;top:173px;">FF</div>
<div class="a ed" style="left:15px;top:192px;">00000400</div>
<div class="a ed" style="left:91px;top:192px;">04</div>
<div class="a ed" style="left:131px;top:192px;">03</div>
<div class="a ed" style="left:171px;top:192px;">02</div>
<div class="a ed" style="left:211px;top:192px;">01</div>
<div class="a ed" style="left:251px;top:192px;">08</div>
<div class="a ed" style="left:291px;top:192px;">07</div>
<div class="a ed" style="left:331px;top:192px;">06</div>
<div class="a ed" style="left:371px;top:192px;">05</div>
<div class="a ed" style="left:411px;top:192px;">F8</div>
<div class="a ed" style="left:15px;top:211px;">00000410</div>
<div class="a ed" style="left:91px;top:211px;">10</div>
<div class="a ed" style="left:131px;top:211px;">B5</div>
<div class="a ed" style="left:171px;top:211px;">05</div>
<div class="a ed" style="left:211px;top:211px;">4C</div>
<div class="a ed" style="left:251px;top:211px;">23</div>
<div class="a ed" style="left:291px;top:211px;">78</div>
<div class="a ed" style="left:331px;top:211px;">33</div>
<div class="a ed" style="left:371px;top:211px;">B9</div>
<div class="a ed" style="left:411px;top:211px;">04</div>
<div class="a ed" style="left:15px;top:230px;">00000420</div>
<div class="a ed" style="left:91px;top:230px;">00</div>
<div class="a ed" style="left:131px;top:230px;">80</div>
<div class="a ed" style="left:171px;top:230px;">01</div>
<div class="a ed" style="left:211px;top:230px;">23</div>
<div class="a ed" style="left:251px;top:230px;">23</div>
<div class="a ed" style="left:291px;top:230px;">70</div>
<div class="a ed" style="left:331px;top:230px;">10</div>
<div class="a ed" style="left:371px;top:230px;">BD</div>
<div class="a ed" style="left:411px;top:230px;">18</div>
</div>
<div class="redbox" style="left:1235px;top:306px;width:398px;height:32px"></div>
<div class="a " style="left:1633px;top:308px;width:37px;height:2px;background:#7f8588"></div>
<div class="redbox" style="left:1233px;top:511px;width:406px;height:43px"></div>
</body></html>
